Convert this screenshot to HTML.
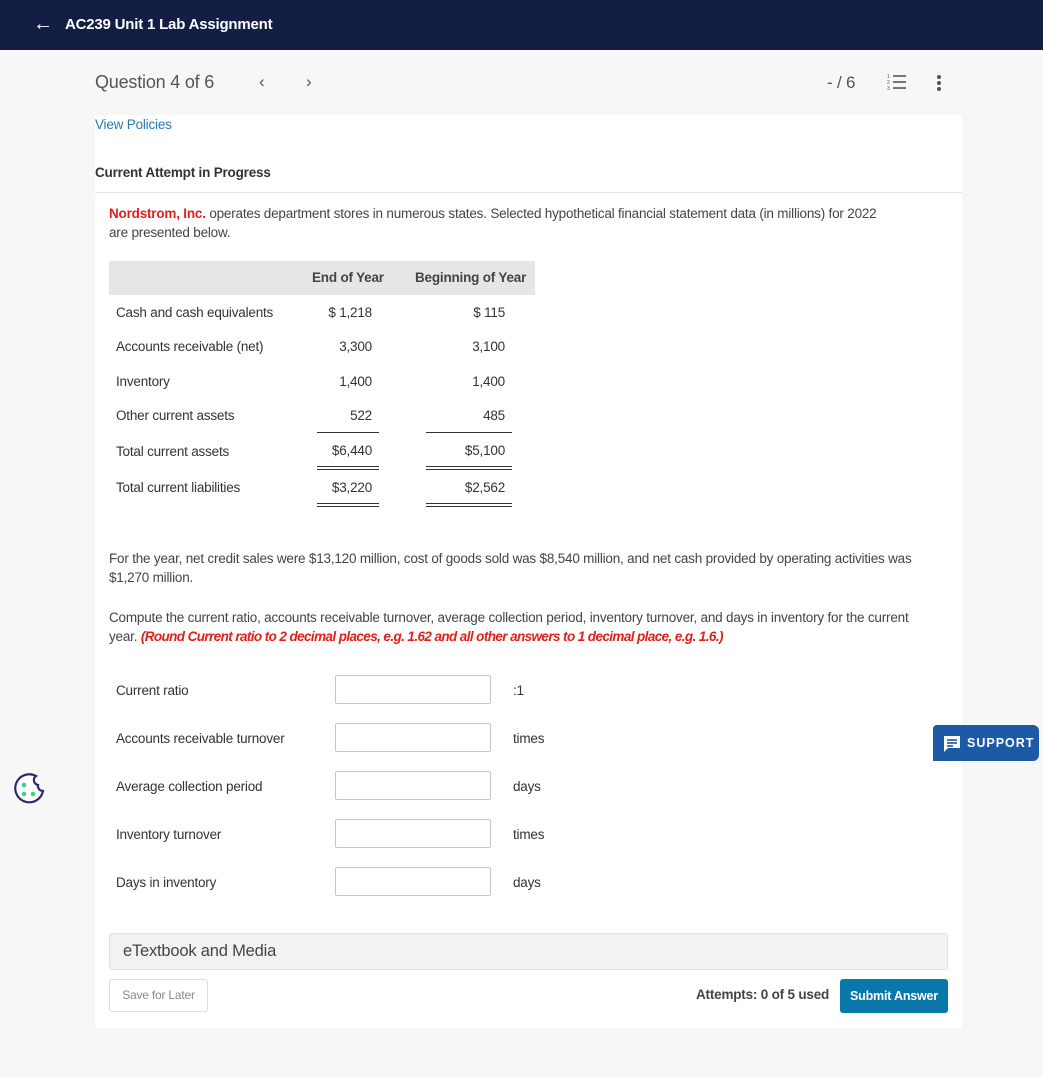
<!DOCTYPE html>
<html><head><meta charset="utf-8"><style>
*{margin:0;padding:0;box-sizing:border-box}
body{width:1043px;height:1077px;background:#f7f7f7;font-family:"Liberation Sans",sans-serif;color:#333;position:relative;overflow:hidden;font-size:13.5px;letter-spacing:-0.2px}
.a{position:absolute;white-space:nowrap}
.hdr{left:0;top:0;width:1043px;height:50px;background:#141e45;color:#fff;font-weight:bold;font-size:15px}
.panel{left:95px;top:115px;width:867px;height:913px;background:#fff}
.r{text-align:right}
.ln1{position:absolute;height:1px;background:#333}
.inp{position:absolute;left:335px;width:156px;height:29px;border:1px solid #c8c8c8;border-radius:2px;background:#fff}
</style></head><body>
<div class="a hdr"><span class="a" style="left:33px;top:13px;font-size:20px;font-weight:normal">&#8592;</span><span class="a" style="left:65px;top:16px">AC239 Unit 1 Lab Assignment</span></div>
<div class="a" style="left:95px;top:72px;font-size:18px;color:#555">Question 4 of 6</div>
<div class="a" style="left:259px;top:72px;font-size:17px;color:#555">&lsaquo;</div>
<div class="a" style="left:306px;top:72px;font-size:17px;color:#555">&rsaquo;</div>
<div class="a" style="left:827px;top:73px;font-size:17px;color:#555">- / 6</div>
<svg class="a" style="left:887px;top:73px" width="20" height="18" viewBox="0 0 20 18"><g stroke="#555" stroke-width="1.6"><line x1="6" y1="3" x2="19" y2="3"/><line x1="6" y1="9" x2="19" y2="9"/><line x1="6" y1="15" x2="19" y2="15"/></g><g fill="#555" font-size="5" font-family="Liberation Sans"><text x="0" y="5">1</text><text x="0" y="11">2</text><text x="0" y="17">3</text></g></svg>
<svg class="a" style="left:935px;top:74px" width="8" height="18"><circle cx="4" cy="3" r="2" fill="#555"/><circle cx="4" cy="9" r="2" fill="#555"/><circle cx="4" cy="15" r="2" fill="#555"/></svg>
<div class="a panel"></div>
<div class="a" style="left:95px;top:117px;color:#2a7ab0">View Policies</div>
<div class="a" style="left:95px;top:165px;font-weight:bold;color:#333">Current Attempt in Progress</div>
<div class="a" style="left:95px;top:192px;width:867px;height:1px;background:#e6e6e6"></div>
<div class="a" style="left:109px;top:204px;line-height:19px;white-space:normal;width:780px;color:#444"><span style="color:#e0201b;font-weight:bold">Nordstrom, Inc.</span> operates department stores in numerous states. Selected hypothetical financial statement data (in millions) for 2022 are presented below.</div>
<div class="a" style="left:109px;top:261px;width:426px;height:34px;background:#e6e6e6"></div>
<div class="a" style="left:312px;top:270px;font-weight:bold;color:#444">End of Year</div>
<div class="a" style="left:415px;top:270px;font-weight:bold;color:#444">Beginning of Year</div>
<div class="a" style="left:116px;top:305px">Cash and cash equivalents</div>
<div class="a" style="left:116px;top:339px">Accounts receivable (net)</div>
<div class="a" style="left:116px;top:374px">Inventory</div>
<div class="a" style="left:116px;top:408px">Other current assets</div>
<div class="a" style="left:116px;top:444px">Total current assets</div>
<div class="a" style="left:116px;top:480px">Total current liabilities</div>
<div class="a r" style="left:300px;width:72px;top:305px">$ 1,218</div>
<div class="a r" style="left:300px;width:72px;top:339px">3,300</div>
<div class="a r" style="left:300px;width:72px;top:374px">1,400</div>
<div class="a r" style="left:300px;width:72px;top:408px">522</div>
<div class="a r" style="left:300px;width:72px;top:443px">$6,440</div>
<div class="a r" style="left:300px;width:72px;top:480px">$3,220</div>
<div class="a r" style="left:430px;width:75px;top:305px">$ 115</div>
<div class="a r" style="left:430px;width:75px;top:339px">3,100</div>
<div class="a r" style="left:430px;width:75px;top:374px">1,400</div>
<div class="a r" style="left:430px;width:75px;top:408px">485</div>
<div class="a r" style="left:430px;width:75px;top:443px">$5,100</div>
<div class="a r" style="left:430px;width:75px;top:480px">$2,562</div>
<div class="ln1" style="left:317px;top:432px;width:62px"></div>
<div class="ln1" style="left:426px;top:432px;width:86px"></div>
<div class="ln1" style="left:317px;top:466px;width:62px"></div><div class="ln1" style="left:317px;top:469px;width:62px"></div>
<div class="ln1" style="left:426px;top:466px;width:86px"></div><div class="ln1" style="left:426px;top:469px;width:86px"></div>
<div class="ln1" style="left:317px;top:503px;width:62px"></div><div class="ln1" style="left:317px;top:506px;width:62px"></div>
<div class="ln1" style="left:426px;top:503px;width:86px"></div><div class="ln1" style="left:426px;top:506px;width:86px"></div>
<div class="a" style="left:109px;top:549px;line-height:19px;white-space:normal;width:836px;color:#444">For the year, net credit sales were $13,120 million, cost of goods sold was $8,540 million, and net cash provided by operating activities was $1,270 million.</div>
<div class="a" style="left:109px;top:608px;line-height:19px;white-space:normal;width:830px;color:#444">Compute the current ratio, accounts receivable turnover, average collection period, inventory turnover, and days in inventory for the current year. <i style="color:#e0201b;font-weight:bold;letter-spacing:-0.6px">(Round Current ratio to 2 decimal places, e.g. 1.62 and all other answers to 1 decimal place, e.g. 1.6.)</i></div>
<div class="a" style="left:116px;top:683px">Current ratio</div>
<div class="a" style="left:116px;top:731px">Accounts receivable turnover</div>
<div class="a" style="left:116px;top:779px">Average collection period</div>
<div class="a" style="left:116px;top:827px">Inventory turnover</div>
<div class="a" style="left:116px;top:875px">Days in inventory</div>
<div class="inp" style="top:675px"></div>
<div class="inp" style="top:723px"></div>
<div class="inp" style="top:771px"></div>
<div class="inp" style="top:819px"></div>
<div class="inp" style="top:867px"></div>
<div class="a" style="left:513px;top:683px">:1</div>
<div class="a" style="left:513px;top:731px">times</div>
<div class="a" style="left:513px;top:779px">days</div>
<div class="a" style="left:513px;top:827px">times</div>
<div class="a" style="left:513px;top:875px">days</div>
<div class="a" style="left:109px;top:933px;width:839px;height:37px;background:#f2f2f2;border:1px solid #e2e2e2;border-radius:3px"></div>
<div class="a" style="left:123px;top:942px;font-size:16.5px;color:#444">eTextbook and Media</div>
<div class="a" style="left:109px;top:979px;width:99px;height:33px;border:1px solid #ddd;border-radius:3px;background:#fff;color:#888;font-size:12px;text-align:center;line-height:31px">Save for Later</div>
<div class="a" style="left:696px;top:987px;font-weight:bold;color:#444;font-size:13.5px">Attempts: 0 of 5 used</div>
<div class="a" style="left:840px;top:979px;width:108px;height:34px;background:#0a77ab;border-radius:3px;color:#fff;font-size:12.5px;font-weight:bold;text-align:center;line-height:34px">Submit Answer</div>
<div class="a" style="left:933px;top:725px;width:106px;height:36px;background:#1d5aa6;border-radius:4px 6px 6px 0"></div>
<svg class="a" style="left:942px;top:734px" width="20" height="20" viewBox="0 0 20 20"><path d="M2 2h16v12H6l-4 4z" fill="#fff"/><g stroke="#1d5aa6" stroke-width="1.6"><line x1="5" y1="6" x2="15" y2="6"/><line x1="5" y1="9" x2="15" y2="9"/><line x1="5" y1="12" x2="11" y2="12"/></g></svg>
<div class="a" style="left:967px;top:736px;color:#fff;font-weight:bold;font-size:12.5px;letter-spacing:1px">SUPPORT</div>
<svg class="a" style="left:10px;top:770px" width="38" height="38" viewBox="0 0 38 38"><path d="M26 6 A14 14 0 1 0 33 21 A5 5 0 0 1 28 15 A5 5 0 0 1 26 6z" fill="#fff" stroke="#2b2b6b" stroke-width="2.2"/><circle cx="14" cy="15" r="2.3" fill="#3ecf8e"/><circle cx="14" cy="24" r="2.3" fill="#3ecf8e"/><circle cx="23" cy="24" r="2.3" fill="#3ecf8e"/></svg>
</body></html>
